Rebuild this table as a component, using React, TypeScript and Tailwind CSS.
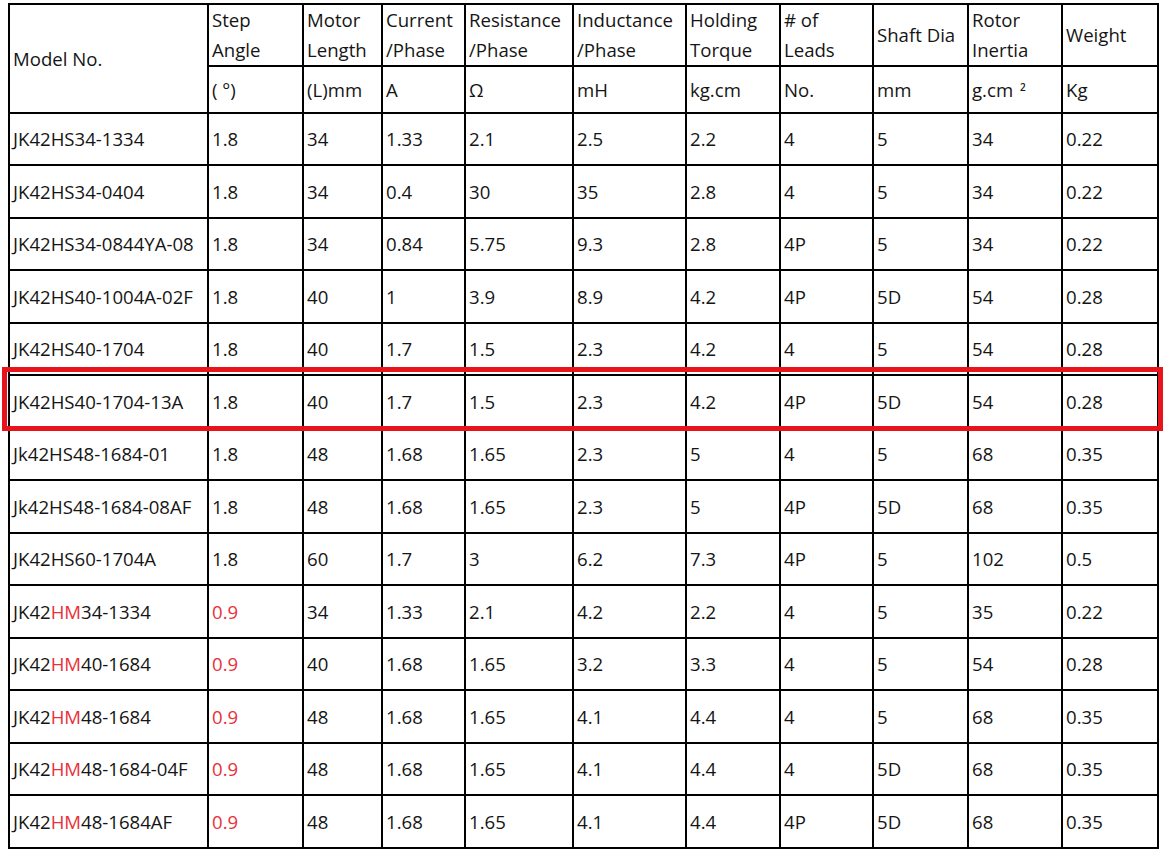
import React from "react";

type Row = {
  model: React.ReactNode;
  step: string;
  red?: boolean;
  cells: string[];
};

const R = ({ children }: { children: React.ReactNode }) => (
  <span className="text-[#e8313a]">{children}</span>
);

const rows: Row[] = [
  { model: "JK42HS34-1334", step: "1.8", cells: ["34", "1.33", "2.1", "2.5", "2.2", "4", "5", "34", "0.22"] },
  { model: "JK42HS34-0404", step: "1.8", cells: ["34", "0.4", "30", "35", "2.8", "4", "5", "34", "0.22"] },
  { model: "JK42HS34-0844YA-08", step: "1.8", cells: ["34", "0.84", "5.75", "9.3", "2.8", "4P", "5", "34", "0.22"] },
  { model: "JK42HS40-1004A-02F", step: "1.8", cells: ["40", "1", "3.9", "8.9", "4.2", "4P", "5D", "54", "0.28"] },
  { model: "JK42HS40-1704", step: "1.8", cells: ["40", "1.7", "1.5", "2.3", "4.2", "4", "5", "54", "0.28"] },
  { model: "JK42HS40-1704-13A", step: "1.8", cells: ["40", "1.7", "1.5", "2.3", "4.2", "4P", "5D", "54", "0.28"] },
  { model: "Jk42HS48-1684-01", step: "1.8", cells: ["48", "1.68", "1.65", "2.3", "5", "4", "5", "68", "0.35"] },
  { model: "Jk42HS48-1684-08AF", step: "1.8", cells: ["48", "1.68", "1.65", "2.3", "5", "4P", "5D", "68", "0.35"] },
  { model: "JK42HS60-1704A", step: "1.8", cells: ["60", "1.7", "3", "6.2", "7.3", "4P", "5", "102", "0.5"] },
  { model: <>JK42<R>HM</R>34-1334</>, step: "0.9", red: true, cells: ["34", "1.33", "2.1", "4.2", "2.2", "4", "5", "35", "0.22"] },
  { model: <>JK42<R>HM</R>40-1684</>, step: "0.9", red: true, cells: ["40", "1.68", "1.65", "3.2", "3.3", "4", "5", "54", "0.28"] },
  { model: <>JK42<R>HM</R>48-1684</>, step: "0.9", red: true, cells: ["48", "1.68", "1.65", "4.1", "4.4", "4", "5", "68", "0.35"] },
  { model: <>JK42<R>HM</R>48-1684-04F</>, step: "0.9", red: true, cells: ["48", "1.68", "1.65", "4.1", "4.4", "4", "5D", "68", "0.35"] },
  { model: <>JK42<R>HM</R>48-1684AF</>, step: "0.9", red: true, cells: ["48", "1.68", "1.65", "4.1", "4.4", "4P", "5D", "68", "0.35"] },
];

const widths = [199, 95, 79, 83, 108, 113, 94, 93, 95, 94, 96];

export default function App() {
  const cell = "border-2 border-black pl-[3px] pr-0 align-middle text-left font-normal whitespace-nowrap";
  return (
    <div
      className="w-[1173px] h-[860px] bg-white text-[#151515] overflow-hidden"
      style={{ fontFamily: '"Open Sans", "Noto Sans", sans-serif' }}
    >
      <div className="relative ml-[8px] pt-[3px]">
        <table className="table-fixed border-collapse w-[1151px] text-[18.6px] leading-[26px] border-2 border-[#2a2a2a]">
          <colgroup>
            {widths.map((w, i) => (
              <col key={i} style={{ width: w }} />
            ))}
          </colgroup>
          <thead>
            <tr className="h-[62px] leading-[30px]">
              <th rowSpan={2} className={cell}>Model No.</th>
              <th className={cell}>Step<br />Angle</th>
              <th className={cell}>Motor<br />Length</th>
              <th className={cell}>Current<br />/Phase</th>
              <th className={cell}>Resistance<br />/Phase</th>
              <th className={cell}>Inductance<br />/Phase</th>
              <th className={cell}>Holding<br />Torque</th>
              <th className={cell}># of<br />Leads</th>
              <th className={cell}>Shaft Dia</th>
              <th className={cell}>Rotor<br />Inertia</th>
              <th className={cell}>Weight</th>
            </tr>
            <tr className="h-[47px]">
              <th className={cell}>( °)</th>
              <th className={cell}>(L)mm</th>
              <th className={cell}>A</th>
              <th className={cell}>Ω</th>
              <th className={cell}>mH</th>
              <th className={cell}>kg.cm</th>
              <th className={cell}>No.</th>
              <th className={cell}>mm</th>
              <th className={cell}>
                g.cm<sup className="ml-[7px] text-[10px] font-semibold relative -top-[6px]">2</sup>
              </th>
              <th className={cell}>Kg</th>
            </tr>
          </thead>
          <tbody>
            {rows.map((r, i) => (
              <tr key={i} className={i % 2 === 0 ? "h-[52px]" : "h-[53px]"}>
                <td className={cell}>{r.model}</td>
                <td className={cell}>{r.red ? <R>{r.step}</R> : r.step}</td>
                {r.cells.map((c, j) => (
                  <td key={j} className={cell}>{c}</td>
                ))}
              </tr>
            ))}
          </tbody>
        </table>
        <div className="absolute left-[-6px] top-[367px] w-[1161px] h-[64px] border-[5px] border-[#e8141b] pointer-events-none" />
      </div>
    </div>
  );
}
